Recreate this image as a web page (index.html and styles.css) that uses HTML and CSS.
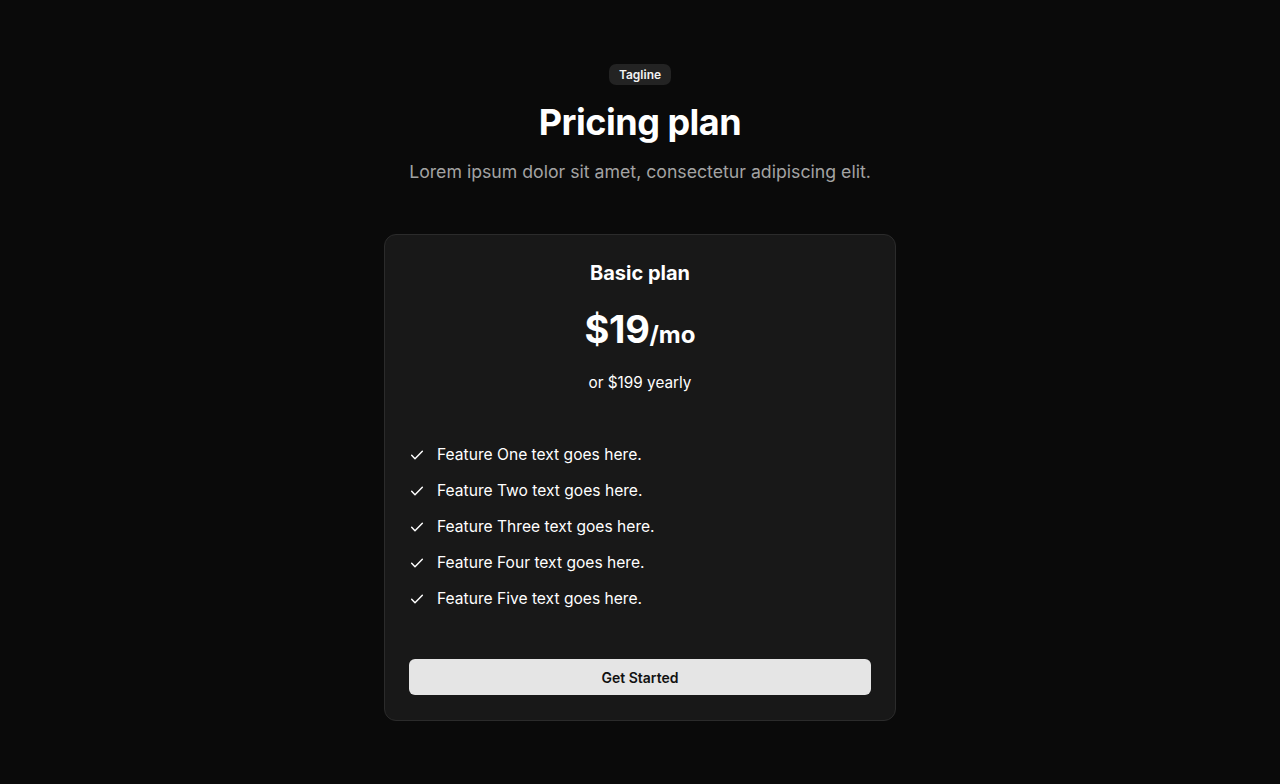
FILE: index.html
```html
<!DOCTYPE html>
<html lang="en">
<head>
<meta charset="utf-8">
<title>Pricing plan</title>
<link rel="stylesheet" href="styles.css">
</head>
<body>
<section class="pricing">
  <header class="intro">
    <span class="tagline">Tagline</span>
    <h1 class="title">Pricing plan</h1>
    <p class="subtitle">Lorem ipsum dolor sit amet, consectetur adipiscing elit.</p>
  </header>
  <div class="card">
    <div class="plan-head">
      <h2 class="plan-name">Basic plan</h2>
      <div class="price"><span class="amount">$19</span><span class="period">/mo</span></div>
      <p class="yearly">or $199 yearly</p>
    </div>
    <ul class="features">
      <li class="feature"><svg class="check" viewBox="0 0 24 24" width="16" height="16"><path d="M4 12.5l5 5L20 6.5" fill="none" stroke="currentColor" stroke-width="2.2" stroke-linecap="round" stroke-linejoin="round"/></svg>Feature One text goes here.</li>
      <li class="feature"><svg class="check" viewBox="0 0 24 24" width="16" height="16"><path d="M4 12.5l5 5L20 6.5" fill="none" stroke="currentColor" stroke-width="2.2" stroke-linecap="round" stroke-linejoin="round"/></svg>Feature Two text goes here.</li>
      <li class="feature"><svg class="check" viewBox="0 0 24 24" width="16" height="16"><path d="M4 12.5l5 5L20 6.5" fill="none" stroke="currentColor" stroke-width="2.2" stroke-linecap="round" stroke-linejoin="round"/></svg>Feature Three text goes here.</li>
      <li class="feature"><svg class="check" viewBox="0 0 24 24" width="16" height="16"><path d="M4 12.5l5 5L20 6.5" fill="none" stroke="currentColor" stroke-width="2.2" stroke-linecap="round" stroke-linejoin="round"/></svg>Feature Four text goes here.</li>
      <li class="feature"><svg class="check" viewBox="0 0 24 24" width="16" height="16"><path d="M4 12.5l5 5L20 6.5" fill="none" stroke="currentColor" stroke-width="2.2" stroke-linecap="round" stroke-linejoin="round"/></svg>Feature Five text goes here.</li>
    </ul>
    <button class="cta" type="button">Get Started</button>
  </div>
</section>
</body>
</html>
```
FILE: styles.css
```css
* { box-sizing: border-box; }
html, body { margin: 0; padding: 0; }
body {
  background: #0a0a0a;
  color: #fff;
  font-family: Inter, "Noto Sans", sans-serif;
  min-height: 784px;
}
.pricing {
  display: flex;
  flex-direction: column;
  align-items: center;
  padding-top: 64px;
}
.intro {
  display: flex;
  flex-direction: column;
  align-items: center;
}
.tagline {
  background: #232323;
  color: #f2f2f2;
  font-size: 12px;
  font-weight: 600;
  line-height: 21px;
  padding: 0 10px;
  border-radius: 7px;
}
.title {
  margin: 15px 0 0;
  font-size: 36px;
  line-height: 44px;
  font-weight: 700;
  letter-spacing: -0.5px;
}
.subtitle {
  margin: 15px 0 0;
  font-size: 17.7px;
  line-height: 26px;
  color: #a3a3a3;
}
.card {
  margin-top: 49px;
  width: 512px;
  background: #181818;
  border: 1px solid #2b2b2b;
  border-radius: 12px;
  padding: 24px 24px 25px;
  display: flex;
  flex-direction: column;
}
.plan-head {
  display: flex;
  flex-direction: column;
  align-items: center;
}
.plan-name {
  margin: 0;
  font-size: 20px;
  line-height: 28px;
  font-weight: 700;
}
.price {
  margin-top: 18px;
  display: flex;
  align-items: baseline;
  line-height: 48px;
}
.amount {
  font-size: 38px;
  font-weight: 700;
  letter-spacing: -0.3px;
}
.period {
  font-size: 24px;
  font-weight: 700;
}
.yearly {
  margin: 12px 0 0;
  font-size: 15.3px;
  line-height: 24px;
}
.features {
  list-style: none;
  margin: 48px 0 0;
  padding: 0;
  display: flex;
  flex-direction: column;
  gap: 12px;
}
.feature {
  display: flex;
  align-items: center;
  gap: 12px;
  font-size: 15.6px;
  line-height: 24px;
}
.check { flex: none; color: #fff; }
.cta {
  margin-top: 48px;
  height: 36px;
  border: none;
  border-radius: 6px;
  background: #e5e5e5;
  color: #111;
  font-family: inherit;
  font-size: 14px;
  font-weight: 600;
}
```
